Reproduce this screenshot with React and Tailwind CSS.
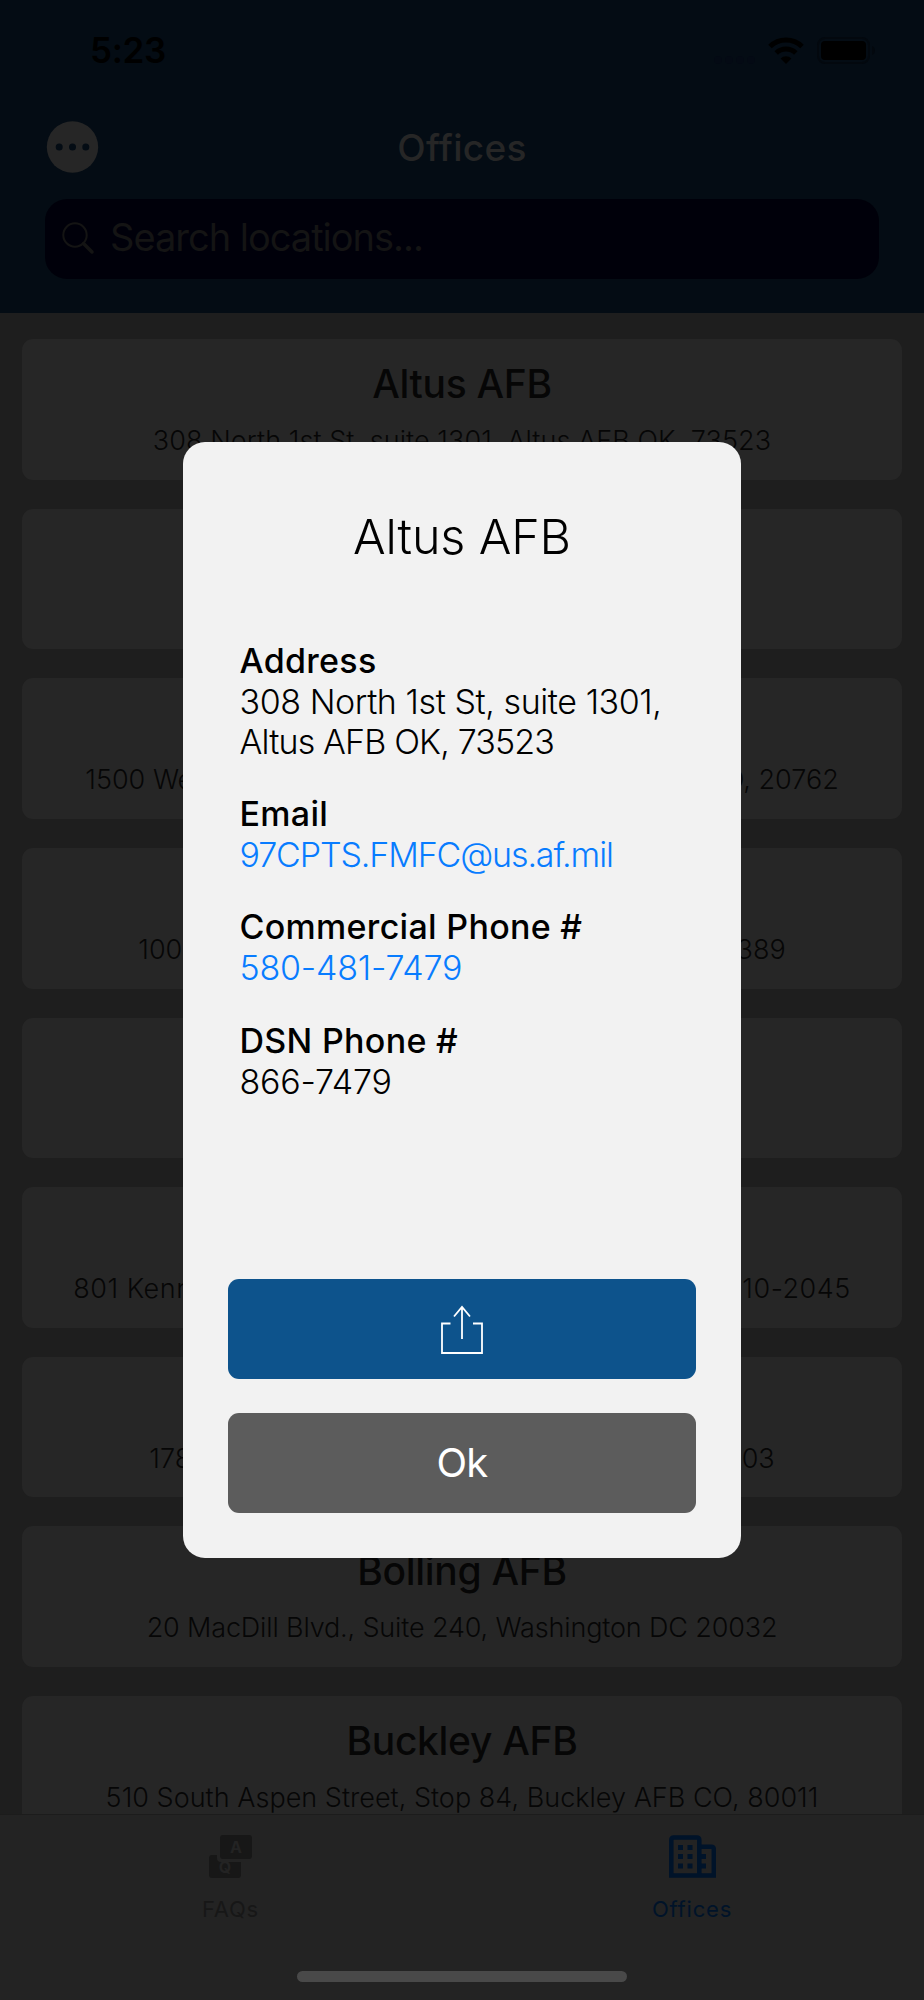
const offices = [
    { name: 'Altus AFB', address: '308 North 1st St, suite 1301, Altus AFB OK, 73523', tracking: 'tracking-[0.060px]' },
    {},
    { start: '1500 We', end: 'D, 20762', padding: 'px-[63px]' },
    { start: '100', end: '389', padding: 'px-[116px]' },
    {},
    { start: '801 Kenn', end: '10-2045', padding: 'px-[51px]', tracking: 'tracking-[0.500px]' },
    { start: '178', end: '03', padding: 'px-[127px]' },
    { name: 'Bolling AFB', address: '20 MacDill Blvd., Suite 240, Washington DC 20032', tracking: 'tracking-[-0.150px]' },
    { name: 'Buckley AFB', address: '510 South Aspen Street, Stop 84, Buckley AFB CO, 80011', tracking: 'tracking-[0.020px]' },
];

const StatusBar = () => (
    <div className="h-[102px] flex items-center justify-between pl-[90px] pr-[48px]">
        <span className="-mt-px text-[35px] font-semibold leading-none tracking-[-0.300px] text-black">5:23</span>
        <div className="-mt-px flex items-center">
            <svg width="42" height="8" viewBox="0 0 42 8" className="mt-[18px] mr-[12px]" fill="#040a14">
                <circle cx="4" cy="4" r="4" />
                <circle cx="15" cy="4" r="4" />
                <circle cx="26" cy="4" r="4" />
                <circle cx="37" cy="4" r="4" />
            </svg>
            <svg width="36" height="27" viewBox="0 0 36 27" className="mr-[13px]" fill="none" stroke="#000" strokeWidth="5">
                <path d="M2 9.500a23 23 0 0 1 32 0" />
                <path d="M8.200 16a14.200 14.200 0 0 1 19.600 0" />
                <path d="M18 27l-5.400-5.600a8 8 0 0 1 10.800 0z" fill="#000" stroke="none" />
            </svg>
            <svg width="59" height="27" viewBox="0 0 59 27">
                <rect x="1" y="1" width="51" height="25" rx="7" fill="none" stroke="#03080e" strokeWidth="2" />
                <rect x="4" y="4" width="45" height="19" rx="4" fill="#000" />
                <path d="M55 9q3 1.500 3 4.500t-3 4.500z" fill="#03080e" />
            </svg>
        </div>
    </div>
);

const Header = () => (
    <header className="h-[313px] shrink-0 bg-[#040c14]">
        <StatusBar />
        <div className="h-[90px] grid grid-cols-3 items-center px-[46px]">
            <svg width="53" height="52" viewBox="0 0 53 52">
                <circle cx="26.500" cy="26" r="25.700" fill="#262626" />
                <g fill="#040c14">
                    <circle cx="13.200" cy="26" r="3.500" />
                    <circle cx="26.500" cy="26" r="3.500" />
                    <circle cx="39.800" cy="26" r="3.500" />
                </g>
            </svg>
            <h1 className="pt-0.5 text-center text-[37px] font-medium tracking-[0.300px] text-[#262626]">Offices</h1>
        </div>
        <div className="mx-[45px] mt-[7px] h-[80px] rounded-[22px] bg-[#00000a] flex items-center pl-[17px]">
            <svg width="33" height="33" viewBox="0 0 33 33" className="-mt-px" fill="none" stroke="#141414" strokeLinecap="round">
                <circle cx="13" cy="13" r="11.700" strokeWidth="2" />
                <path d="M21.500 21.500l8.500 8.500" strokeWidth="3.500" />
            </svg>
            <span className="-mt-[5px] ml-[15px] text-[38px] leading-none tracking-[-1px] text-[#141414]">Search locations...</span>
        </div>
    </header>
);

// The dialog covers the middle of most rows, those only carry a start and an end
const OfficeCard = ({ name, address, tracking = '', start, end, padding }) => (
    <div className="h-[140.500px] shrink-0 rounded-[11px] bg-[#262626] text-center whitespace-nowrap text-[#060606]">
        <h2 className="h-[90px] pt-[20px] text-[39px] leading-[50px] font-medium tracking-[-0.300px]">{name}</h2>
        {address && <p className={`text-[27px] leading-[24px] font-light ${tracking}`}>{address}</p>}
        {start && (
            <p className={`flex justify-between text-[27px] leading-[24px] font-light ${padding} ${tracking}`}>
                <span>{start}</span>
                <span>{end}</span>
            </p>
        )}
    </div>
);

const TabBar = () => (
    <nav className="absolute inset-x-0 bottom-0 h-[186px] border-t border-[#1c1c1c] bg-[#232323]">
        <div className="grid grid-cols-2 text-[22px] leading-[28px] tracking-[0.800px]">
            <div className="flex flex-col items-center pt-[20px] text-[#171717]">
                <svg width="43" height="44" viewBox="0 0 43 44" className="mr-px" fill="#171717">
                    <path d="M3 20h5v3q0 4 4 4h20v13q0 3-3 3H3q-3 0-3-3V23q0-3 3-3z" />
                    <rect x="11" y="0" width="32" height="24" rx="3" />
                    <text x="27" y="18" textAnchor="middle" fontSize="16" fontWeight="700" letterSpacing="0" fill="#232323">A</text>
                    <text x="16" y="38" textAnchor="middle" fontSize="16" fontWeight="700" letterSpacing="0" fill="#232323">Q</text>
                </svg>
                <span className="mt-[16px] mr-px">FAQs</span>
            </div>
            <div className="flex flex-col items-center pt-[20px] pr-0.5 text-[#001329]">
                <svg width="47" height="44" viewBox="0 0 47 44">
                    <path d="M2.300 40.500V5q0-2.500 2.500-2.500h23q2.500 0 2.500 2.500v35.500zM30.300 11.700h12q2.500 0 2.500 2.500v26.300H30.300" fill="none" stroke="#001329" strokeWidth="4.500" />
                    <path d="M9 10h5v5H9zM18.500 10h5v5h-5zM9 19h5v5H9zM18.500 19h5v5h-5zM9 28.500h5v5H9zM18.500 28.500h5v5h-5zM32 19h5v5h-5zM32 28.500h5v5h-5z" fill="#001329" />
                </svg>
                <span className="mt-[16px]">Offices</span>
            </div>
        </div>
        <div className="absolute bottom-[18px] left-[297px] h-[11px] w-[330px] rounded-full bg-[#494949]" />
    </nav>
);

const Field = ({ label, className = '', children }) => (
    <div className="mb-[31.200px]">
        <h3 className="text-[34px] leading-[42px] font-medium tracking-[0.300px]">{label}</h3>
        <p className={`text-[34px] leading-[40px] font-light ${className}`}>{children}</p>
    </div>
);

const OfficeModal = () => (
    <div className="absolute left-[183px] top-[442px] h-[1116px] w-[558px] rounded-[22px] bg-[#f2f2f2] px-[45px] pb-[45px] flex flex-col text-black">
        <h2 className="mt-[65px] text-center text-[48.500px] leading-[60px] font-light tracking-[-0.150px]">Altus AFB</h2>
        <div className="mt-[73px] px-[11.500px] whitespace-nowrap">
            <Field label="Address" className="tracking-[-0.430px]">
                308 North 1st St, suite 1301,
                <br />
                <span className="tracking-[-0.860px]">Altus AFB OK, 73523</span>
            </Field>
            <Field label="Email" className="tracking-[-1.120px] text-[#087cff]">97CPTS.FMFC@us.af.mil</Field>
            <Field label="Commercial Phone #" className="tracking-[-0.200px] text-[#087cff]">580-481-7479</Field>
            <Field label="DSN Phone #" className="tracking-[-0.200px]">866-7479</Field>
        </div>
        <button className="mt-auto h-[100px] rounded-[11px] bg-[#0d538c] flex items-center justify-center">
            <svg width="44" height="50" viewBox="0 0 44 50" className="mt-px mr-px" fill="none" stroke="#fff" strokeWidth="1.800">
                <path d="M10.500 18.500H2V48h40V18.500h-9M22 34V2M14 11.500L22 2l8 9.500" />
            </svg>
        </button>
        <button className="mt-[34px] h-[100px] rounded-[11px] bg-[#5c5c5c] text-[40px] tracking-[-0.800px] text-white">Ok</button>
    </div>
);

export default function App() {
    return (
        <div className="relative h-[2000px] w-[924px] overflow-hidden bg-[#1e1e1e] font-['Inter',sans-serif] flex flex-col">
            <Header />
            <main className="flex flex-col gap-[29.100px] px-[22.300px] pt-[26.300px]">
                {offices.map((office, i) => (
                    <OfficeCard key={i} {...office} />
                ))}
            </main>
            <TabBar />
            <OfficeModal />
        </div>
    );
}
